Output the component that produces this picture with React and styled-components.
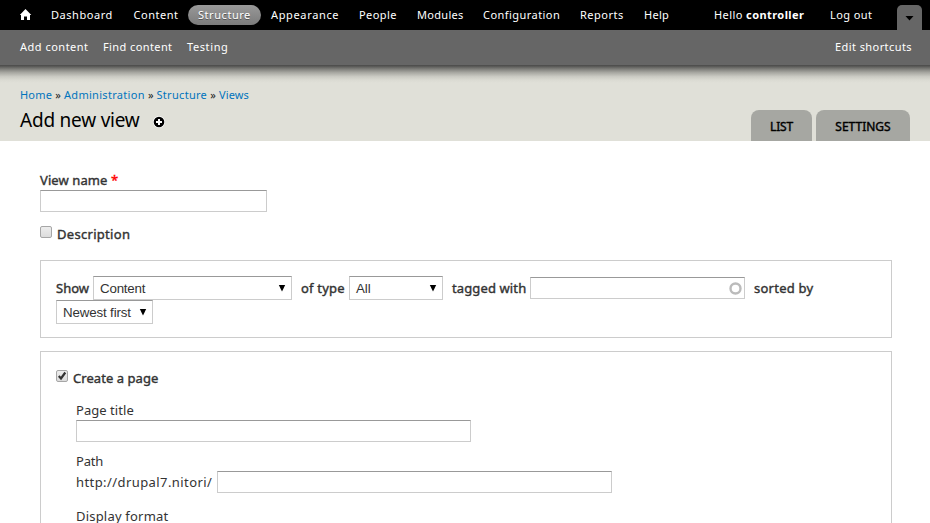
import React from "react";
import styled, { createGlobalStyle } from "styled-components";

const Global = createGlobalStyle`
  * { box-sizing: border-box; }
  html, body { margin: 0; padding: 0; background: #fff; overflow: hidden; }
  body { font: 13px/20px "Noto Sans", "Open Sans", sans-serif; color: #333; }
`;

const Page = styled.div`
  width: 930px;
  height: 523px;
  overflow: hidden;
`;
const Text = styled.span`
  display: inline-block;
  white-space: nowrap;
  letter-spacing: ${(p) => p.$ls || 0}px;
`;
const Toolbar = styled.nav`
  position: relative;
`;
const MenuBar = styled.div`
  display: flex;
  align-items: flex-start;
  height: 30px;
  padding: 5px 8px 0 10px;
  background: #000;
  font-size: 11px;
  color: #fff;
`;
const MenuItem = styled.a`
  flex: none;
  width: ${(p) => p.$w}px;
  height: 20px;
  line-height: 20px;
  padding-left: 10px;
  border-radius: 10px;
  white-space: nowrap;
  background: ${(p) => (p.$active ? "linear-gradient(#999, #7b7b7b)" : "none")};
  text-shadow: ${(p) => (p.$active ? "0 1px 0 #555" : "none")};
  svg { display: block; margin-top: 4px; }
`;
const Spacer = styled.div`
  flex: 1;
`;
const Toggle = styled.button`
  display: flex;
  align-items: flex-start;
  justify-content: center;
  width: 25px;
  height: 25px;
  margin: 0 0 0 15px;
  padding: 11px 0 0;
  border: 0;
  border-radius: 5px 5px 0 0;
  background: #666;
`;
const Drawer = styled.div`
  display: flex;
  height: 35px;
  padding: 7px 18px 0 20px;
  background: #666;
  color: #fff;
  font-size: 11px;
  line-height: 20px;
`;
const Shortcut = styled.a`
  width: ${(p) => p.$w}px;
  white-space: nowrap;
`;
const Shade = styled.div`
  position: absolute;
  left: 0;
  right: 0;
  top: 65px;
  height: 18px;
  background: linear-gradient(#4a4a49 0, #555553 6%, #7d7d79 22%, #a7a7a1 42%, #cacac3 64%, #dbdbd3 84%, #e0e0d8 100%);
`;
const Branding = styled.header`
  display: flex;
  justify-content: space-between;
  height: 76px;
  padding: 20px 20px 0;
  background: #e0e0d8;
`;
const Crumbs = styled.div`
  display: flex;
  height: 20px;
  font-size: 11px;
  line-height: 20px;
  color: #222;
  a { color: #0074bd; }
`;
const Crumb = styled.span`
  width: ${(p) => p.$w}px;
  white-space: nowrap;
`;
const Title = styled.h1`
  display: flex;
  align-items: center;
  gap: 13px;
  margin: 2px 0 0;
  height: 26px;
  font-size: 19px;
  font-weight: 400;
  line-height: 26px;
  color: #000;
  svg { position: relative; top: 2px; }
`;
const TitleText = styled(Text)`
  width: 120px;
`;
const Tabs = styled.div`
  display: flex;
  align-items: flex-end;
  gap: 4px;
`;
const Tab = styled.a`
  display: flex;
  justify-content: center;
  width: ${(p) => p.$w}px;
  height: 31px;
  padding-top: 7px;
  border-radius: 8px 8px 0 0;
  background: #a6a7a2;
  color: #000;
  -webkit-text-stroke: 0.4px #000;
  font-size: 12px;
`;
const Form = styled.main`
  width: 892px;
  padding: 29px 0 0 40px;
`;
const Label = styled.label`
  display: block;
  -webkit-text-stroke: ${(p) => (p.$plain ? "0" : "0.4px currentColor")};
  height: 20px;
  line-height: 20px;
  white-space: nowrap;
`;
const PathLabel = styled(Label)`
  margin-top: 9px;
`;
const Required = styled.span`
  color: #f00;
`;
const TextField = styled.div`
  flex: none;
  display: flex;
  align-items: center;
  justify-content: flex-end;
  width: ${(p) => p.$w}px;
  height: 22px;
  padding-right: 2px;
  border: 1px solid #ccc;
  border-top-color: #999;
  background: #fff;
`;
const CheckRow = styled.div`
  display: flex;
  align-items: flex-start;
  gap: ${(p) => p.$gap}px;
  height: 20px;
  margin-top: ${(p) => p.$mt}px;
`;
const Check = styled.span`
  display: block;
  width: 12px;
  height: 12px;
  margin-top: ${(p) => p.$top}px;
  border: 1px solid #a6a6a6;
  border-radius: 2px;
  background: linear-gradient(#ededed, #dcdcdc);
  svg { display: block; overflow: visible; }
`;
const Fieldset = styled.section`
  height: ${(p) => p.$h}px;
  margin-top: ${(p) => p.$mt}px;
  padding: 15px 15px 0;
  border: 1px solid #ccc;
`;
const Line = styled.div`
  display: flex;
  align-items: center;
  height: 24px;
`;
const Inline = styled(Label)`
  flex: none;
  width: ${(p) => p.$w}px;
  margin-left: ${(p) => p.$ml || 0}px;
`;
const SelectBox = styled.div`
  flex: none;
  display: flex;
  align-items: center;
  justify-content: space-between;
  width: ${(p) => p.$w}px;
  height: 24px;
  padding: 0 5px 0 6px;
  border: 1px solid #ccc;
  border-top-color: #999;
  font: 13.33px/20px "Liberation Sans", Arial, sans-serif;
  color: #333;
`;
const SelectText = styled(Text)`
  padding-top: 2px;
`;
const Indent = styled.div`
  padding: 12px 0 0 20px;
`;
const PathRow = styled.div`
  display: flex;
  height: 22px;
  margin-bottom: 13px;
`;
const Prefix = styled.span`
  width: 141px;
  padding-top: 1px;
  white-space: nowrap;
`;

const MENU = [
  ["Dashboard", 82.5, 0.55],
  ["Content", 64.5, 0.52],
  ["Structure", 73, 0.55, true],
  ["Appearance", 88, 0.65],
  ["People", 58, 0.42],
  ["Modules", 66, 0.3],
  ["Configuration", 97, 0.45],
  ["Reports", 64, 0.5],
  ["Help", 70, 0.3],
];

const Select = ({ w, ls, children }) => (
  <SelectBox $w={w}>
    <SelectText $ls={ls}>{children}</SelectText>
    <svg width="8" height="8" viewBox="0 0 8 8"><path d="M.8 1h6.4L4 7.4z" fill="#000" /></svg>
  </SelectBox>
);

export default function App() {
  return (
    <Page>
      <Global />
      <Toolbar>
        <MenuBar>
          <MenuItem $w={31}>
            <svg width="12" height="12" viewBox="0 0 12 12"><path d="M5.5 0 11.3 6H10v5H7V7.5H4V11H1V6H-.3z" fill="#fff" /></svg>
          </MenuItem>
          {MENU.map(([label, w, ls, active]) => (
            <MenuItem key={label} $w={w} $active={active}><Text $ls={ls}>{label}</Text></MenuItem>
          ))}
          <Spacer />
          <MenuItem $w={116}><Text $ls={0.42}>Hello <b>controller</b></Text></MenuItem>
          <MenuItem $w={62}><Text $ls={0.42}>Log out</Text></MenuItem>
          <Toggle aria-label="Toggle drawer">
            <svg width="9" height="5" viewBox="0 0 9 5"><path d="M.5 0h8L4.5 4.4z" fill="#000" /></svg>
          </Toggle>
        </MenuBar>
        <Drawer>
          <Shortcut $w={83}><Text $ls={0.5}>Add content</Text></Shortcut>
          <Shortcut $w={84}><Text $ls={0.4}>Find content</Text></Shortcut>
          <Shortcut $w={50}><Text $ls={0.6}>Testing</Text></Shortcut>
          <Spacer />
          <Shortcut $w={77}><Text $ls={0.42}>Edit shortcuts</Text></Shortcut>
        </Drawer>
        <Shade />
      </Toolbar>
      <Branding>
        <div>
          <Crumbs>
            <Crumb $w={44}><Text $ls={0.2}><a>Home</a> »</Text></Crumb>
            <Crumb $w={92.5}><Text $ls={0.3}><a>Administration</a> »</Text></Crumb>
            <Crumb $w={62.5}><Text $ls={0.3}><a>Structure</a> »</Text></Crumb>
            <Crumb $w={32}><Text $ls={0.1}><a>Views</a></Text></Crumb>
          </Crumbs>
          <Title>
            <TitleText $ls={-0.22}>Add new view</TitleText>
            <svg width="12" height="12" viewBox="0 0 12 12">
              <circle cx="6" cy="6" r="6" fill="#fff" />
              <circle cx="6" cy="6" r="5.3" fill="#000" />
              <path d="M6 3v6M3 6h6" stroke="#fff" strokeWidth="2" />
            </svg>
          </Title>
        </div>
        <Tabs>
          <Tab $w={61}><Text $ls={-0.2}>LIST</Text></Tab>
          <Tab $w={94}><Text $ls={0}>SETTINGS</Text></Tab>
        </Tabs>
      </Branding>
      <Form>
        <Label><Text $ls={0.1}>View name <Required>*</Required></Text></Label>
        <TextField $w={227} />
        <CheckRow $gap={5} $mt={12}>
          <Check $top={2} />
          <Label><Text $ls={0.3}>Description</Text></Label>
        </CheckRow>
        <Fieldset $h={78} $mt={16}>
          <Line>
            <Inline $w={37}><Text $ls={0}>Show</Text></Inline>
            <Select w={199} ls={-0.2}>Content</Select>
            <Inline $w={48} $ml={9}><Text $ls={0.2}>of type</Text></Inline>
            <Select w={94} ls={-0.1}>All</Select>
            <Inline $w={78} $ml={9}><Text $ls={0.12}>tagged with</Text></Inline>
            <TextField $w={215}>
              <svg width="14" height="14" viewBox="0 0 14 14"><circle cx="7.5" cy="7.5" r="5" fill="none" stroke="#bbb" strokeWidth="2.4" /></svg>
            </TextField>
            <Inline $w={62} $ml={9}><Text $ls={0.25}>sorted by</Text></Inline>
          </Line>
          <Select w={97} ls={-0.15}>Newest first</Select>
        </Fieldset>
        <Fieldset $h={190} $mt={13}>
          <CheckRow $gap={5} $mt={1}>
            <Check $top={2}>
              <svg width="10" height="10" viewBox="0 0 10 10"><path d="M1.8 5 4 7.5 8.3 1.5" fill="none" stroke="#333" strokeWidth="2.2" /></svg>
            </Check>
            <Label><Text $ls={0.06}>Create a page</Text></Label>
          </CheckRow>
          <Indent>
            <Label $plain><Text $ls={0.05}>Page title</Text></Label>
            <TextField $w={395} />
            <PathLabel $plain><Text $ls={-0.2}>Path</Text></PathLabel>
            <PathRow>
              <Prefix><Text $ls={0.42}>http://drupal7.nitori/</Text></Prefix>
              <TextField $w={395} />
            </PathRow>
            <Label $plain><Text $ls={0.2}>Display format</Text></Label>
          </Indent>
        </Fieldset>
      </Form>
    </Page>
  );
}
